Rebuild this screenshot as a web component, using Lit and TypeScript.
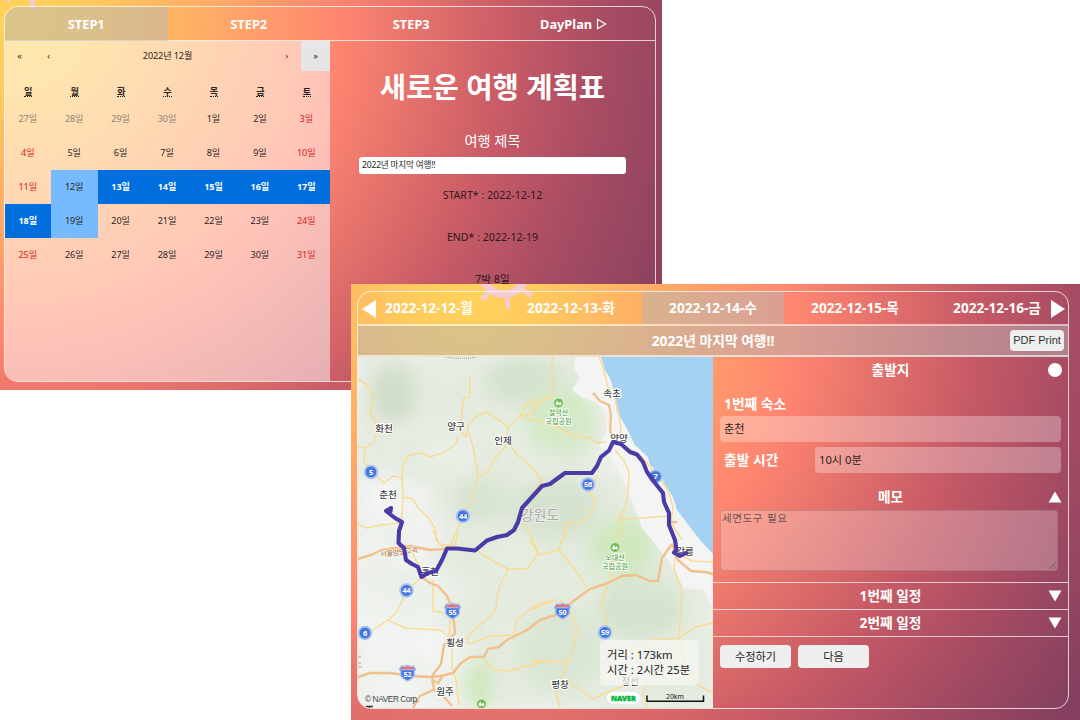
import { LitElement, html, svg, css } from "lit";
import { customElement, property } from "lit/decorators.js";
import { classMap } from "lit/directives/class-map.js";

const gear = (cls: string) => html`
  <svg class=${cls} viewBox="-40 -40 80 80" width="80" height="80" aria-hidden="true">
    <g fill="none" stroke="#f5cdd0">
      <circle r="22.2" stroke-width="8"></circle>
      <g stroke-width="5">
        <path d="M3 25 4 37M-16 21-22 28M17 17 28 24M-25 3-36 6M25-5 36-8M0-25 0-36M-17-17-25-25M17-18 25-26"></path>
      </g>
    </g>
  </svg>`;

@customElement("trip-calendar")
class TripCalendar extends LitElement {
  static styles = css`
    :host { display: block; background: rgba(255, 255, 255, 0.5); font-size: 9.1px; color: #2a2522; letter-spacing: -0.1px; }
    .nav { display: grid; grid-template-columns: 29px 29px 1fr 29px 29px; height: 30px; line-height: 30px; text-align: center; margin-bottom: 11px; }
    .month { font-size: 9.1px; }
    .last { background: #e6e6e6; height: 30px; }
    .grid { display: grid; grid-template-columns: repeat(7, 1fr); text-align: center; }
    .wd { height: 20px; line-height: 20px; font-weight: 600; }
    .wd span { border-bottom: 1px dotted #222; display: inline-block; line-height: 9px; }
    .day { height: 34px; line-height: 34px; padding-right: 1px; }
    .out { color: #8d8377; }
    .red { color: #d82222; }
    .edge { background: #76baff; }
    .range { background: #006edc; color: #fff; font-weight: 700; }
  `;
  render() {
    const days = [27, 28, 29, 30, ...Array.from({ length: 31 }, (_, i) => i + 1)];
    return html`
      <div class="nav"><span>«</span><span>‹</span><span class="month">2022년 12월</span><span>›</span><span class="last">»</span></div>
      <div class="grid">
        ${["일", "월", "화", "수", "목", "금", "토"].map((d) => html`<div class="wd"><span>${d}</span></div>`)}
        ${days.map((d, i) => {
          const out = i < 4;
          const range = !out && d >= 13 && d <= 18;
          return html`<div class=${classMap({
            day: true, out, range,
            edge: !out && (d === 12 || d === 19),
            red: !out && !range && (i % 7 === 6 || i % 7 === 0),
          })}>${d}일</div>`;
        })}
      </div>`;
  }
}

@customElement("route-map")
class RouteMap extends LitElement {
  static styles = css`
    :host { display: block; position: relative; overflow: hidden; }
    svg { display: block; }
    text { font-family: "Noto Sans", "Noto Sans CJK KR", sans-serif; }
    .city { font-size: 9.6px; fill: #444; stroke: #fff; stroke-width: 2px; paint-order: stroke; text-anchor: middle; font-weight: 500; }
    .park { font-size: 7px; fill: #4c9f43; stroke: #fff; stroke-width: 1.5px; paint-order: stroke; text-anchor: middle; font-weight: 500; }
    .num { font-size: 7.4px; fill: #fff; text-anchor: middle; font-weight: 700; letter-spacing: -0.3px; }
    .minor { fill: none; stroke: #f8dc96; stroke-width: 1.5; stroke-linejoin: round; }
    .major { fill: none; stroke: #f2c08c; stroke-width: 2.4; stroke-linejoin: round; }
    .route { fill: none; stroke: #4a3ba7; stroke-width: 4.1; stroke-linejoin: round; stroke-linecap: round; }
    .info { position: absolute; left: 242px; top: 283px; width: 99px; height: 45px; box-sizing: border-box; padding: 7px 0 0 7px; background: rgba(247, 247, 242, 0.72); border-radius: 4px; font-size: 11.3px; line-height: 15px; color: #222; white-space: nowrap; }
  `;
  private city(x: number, y: number, t: string) { return svg`<text class="city" x=${x} y=${y}>${t}</text>`; }
  private circleSign(x: number, y: number, n: string) {
    return svg`<circle cx=${x} cy=${y} r="7.2" fill="#9dbcf2"></circle><circle cx=${x} cy=${y} r="5.9" fill="#4676de" stroke="#dce8fb" stroke-width=".6"></circle><text class="num" x=${x} y=${y + 2.7}>${n}</text>`;
  }
  private shield(x: number, y: number, n: string) {
    return svg`<g transform="translate(${x} ${y})"><path d="M-6-7Q-3-6 0-7.5 3-6 6-7L8-4Q6-1 7 2 6 5 0 8-6 5-7 2-6-1-8-4Z" fill="#4676de" stroke="#a9c4f2" stroke-width="1.4"></path><path d="M-6-6.3H6V-3.6H-6Z" fill="#ee7374"></path><path d="M-6.5-3.2H6.5" stroke="#dde8fb" stroke-width=".7"></path><text class="num" x="0" y="4">${n}</text></g>`;
  }
  private tree(x: number, y: number) {
    return svg`<g transform="translate(${x} ${y})"><circle r="4.9" fill="#6bbb52" stroke="#e7f5df" stroke-width=".8"></circle><path d="M-1.4-2.8-3.2 1.4H-1.8V2.7H-1V1.4H3.4L1.7-1.8.5.2Z" fill="#fff"></path><path d="M1.6 1.2V2.7" stroke="#fff" stroke-width=".8"></path></g>`;
  }
  render() {
    return html`
      <svg viewBox="358 357 355 351" width="355" height="351">
        <defs>
          <filter id="soft" x="-30%" y="-30%" width="160%" height="160%"><feGaussianBlur stdDeviation="9"></feGaussianBlur></filter>
          <filter id="grain" x="0" y="0" width="100%" height="100%">
            <feTurbulence type="fractalNoise" baseFrequency=".022" numOctaves="4" seed="8"></feTurbulence>
            <feColorMatrix values="0 0 0 0 .72  0 0 0 0 .8  0 0 0 0 .66  1.9 0 0 0 -.72"></feColorMatrix>
          </filter>
        </defs>
        <rect x="358" y="357" width="355" height="351" fill="#f0f2ef"></rect>
        <g filter="url(#soft)">
          <path d="M358 357H600L590 400 605 440 590 470 650 500 670 560 713 590V708H490L470 640 400 600 450 540 430 480 358 470Z" fill="#e5ece1"></path>
          <ellipse cx="393" cy="393" rx="22" ry="30" fill="#d0dcc8"></ellipse>
          <ellipse cx="525" cy="380" rx="40" ry="25" fill="#d5e2cf"></ellipse>
          <ellipse cx="562" cy="420" rx="36" ry="32" fill="#d3eac4"></ellipse>
          <ellipse cx="480" cy="500" rx="28" ry="22" fill="#d8e3d2"></ellipse>
          <ellipse cx="555" cy="510" rx="45" ry="30" fill="#d6e2ce"></ellipse>
          <ellipse cx="622" cy="548" rx="34" ry="30" fill="#cfe8bd"></ellipse>
          <ellipse cx="640" cy="610" rx="45" ry="30" fill="#d6e2cf"></ellipse>
          <ellipse cx="478" cy="685" rx="14" ry="26" fill="#cee8bc"></ellipse>
          <ellipse cx="560" cy="650" rx="42" ry="45" fill="#dae6d3"></ellipse>
          <ellipse cx="450" cy="460" rx="30" ry="14" fill="#edf2ea"></ellipse>
          <ellipse cx="388" cy="510" rx="26" ry="40" fill="#f4f5f5"></ellipse>
          <ellipse cx="400" cy="650" rx="46" ry="45" fill="#f3f5f3"></ellipse>
          <ellipse cx="430" cy="590" rx="40" ry="24" fill="#ecf1ea"></ellipse>
        </g>
        <rect x="358" y="357" width="355" height="351" filter="url(#grain)" opacity=".42"></rect>
        <path d="M575 357H601L640 450 713 554V610L704 590 684 588 668 560 642 528 632 500 622 478 612 458 600 446 606 432 607 412 596 402 582 398 572 390 580 378 574 368Z" fill="#f4f4f4"></path>
        <path d="M601 357 605 370 610 378 613 388 615 399 617 412 625 425 630 435 635 445 648 457 650 465 660 473 665 485 673 497 677 510 690 527 700 540 713 554V357Z" fill="#a5d2f3"></path>
        <path d="M446 357.3Q462 359.5 476 357.3" fill="none" stroke="#888" stroke-dasharray="1 1"></path>

        <g class="minor">
          <path d="M358 379 366 384 372 394 373 403 370 413 377 424 374 442 365 448 364 462 376 475 384 483 393 476 402 478 403 465 409 455 422 453 430 457 443 453 455 445 458 437M468 425 474 418 486 412 499 420 508 427 505 447 494 460 487 473 478 476 473 447 468 430"></path>
          <path d="M358 446 365 449M470 377V397L463 399 462 416 458 430 466 437 468 425"></path>
          <path d="M508 427 520 416 532 414 540 402 551 397M520 416 527 404 540 398M524 418 540 421 558 427 575 436 590 438 598 443 606 442M531 409 545 399 551 395 554 380 551 370 553 357"></path>
          <path d="M510 445 517 455 525 461 534 470 541 480 535 490 542 486M478 476 473 495 465 511 457 530 449 548"></path>
          <path d="M402 478 403 497 401 525M403 497 413 499 418 508 427 516 436 530 436 540 447 549M358 524 367 528 381 525 400 523"></path>
          <path d="M599 357 604 370 608 387 615 398 619 415 621 430 617 442 640 455 655 473 668 490 673 507 671 522 682 540M615 450 624 461 629 472 628 493 625 508 618 520 630 519 668 516M598 475 592 486 589 493 595 498 592 510 584 522 567 523 564 537 558 550 574 568 587 587"></path>
          <path d="M622 519 619 536 614 557 610 580 601 601 604 611 607 627M523 508 526 524 530 535 538 553 527 569 508 569 491 560 477 551"></path>
          <path d="M508 569 499 588 495 612 479 626 467 637 469 644 491 636 513 635"></path>
          <path d="M433 580 433 611 450 614 450 630 447 640M421 578 407 590 402 601 397 612 388 620 370 632M388 620 405 628 440 630 447 635"></path>
          <path d="M530 540 539 555 558 550 563 540 567 523M530 609 543 602 558 600M560 600 571 612 577 630 573 650 568 662 530 661M568 662 561 680 556 691 560 708M568 680 577 687 592 699 610 691 640 680"></path>
          <path d="M676 552 674 568 682 590 680 620 679 638 650 640 620 658M679 638 695 627 713 623M679 638 684 660 699 686 713 693"></path>
          <path d="M485 660 493 670 510 671 529 665 550 660M513 640 517 620 528 611 550 602M452 641 452 667 456 680 459 705M680 555 692 561 713 562"></path>
          <path d="M410 548 419 566 422 578M646 684 643 693 647 708M433 530 440 545 455 545 458 532"></path>
        </g>
        <g class="major">
          <path d="M358 559 371 555 382 550 410 546 430 550 447 549M423 578 430 583 438 586 447 596 453 611 455 633 444 645 441 664 432 676 434 690 444 697 452 706M358 677 370 673 390 673 413 676 430 677 441 676 453 673 460 664 470 657 484 657 488 649 499 647 507 640 527 630 540 620 549 617 562 613 572 602 590 589 608 583 622 576 636 575 650 581 658 581 662 558 672 544"></path>
          <path d="M593 393 600 401 609 405 611 415 610 430 613 440M672 544 678 560 691 571 705 572 713 574M432 680 438 683 443 675M433 690 420 696 413 708M671 522H677"></path>
        </g>
        <path d="M358 657H361M358 663H361M358 667H362" stroke="#aaa"></path>

        ${this.city(384, 432, "화천")}${this.city(456, 430, "양구")}${this.city(503, 444, "인제")}
        ${this.city(388, 498, "춘천")}${this.city(612, 397, "속초")}${this.city(619, 442, "양양")}
        ${this.city(430, 575, "홍천")}${this.city(455, 646, "횡성")}${this.city(445, 695, "원주")}
        ${this.city(560, 688, "평창")}${this.city(685, 555, "강릉")}${this.city(630, 685, "정선")}
        <text x="540" y="519.5" font-size="14" fill="#a9aaa9" stroke="#eef1ec" stroke-width="1.5" paint-order="stroke" text-anchor="middle">강원도</text>
        <text x="380.5" y="557" font-size="7.2" fill="#a86a2c" stroke="#fff" stroke-width="1" paint-order="stroke" textLength="38" transform="rotate(-7 380 557)">서울양양고속</text>
        ${this.tree(558.5, 403)}<text class="park" x="558.5" y="415">설악산</text><text class="park" x="558.5" y="424">국립공원</text>
        ${this.tree(615, 547.5)}<text class="park" x="615" y="559.5">오대산</text><text class="park" x="615" y="568.5">국립공원</text>
        ${this.tree(481.5, 704)}
        ${this.circleSign(655.5, 476.5, "7")}
        <path class="route" d="M390.5 511.5 391 508 386 511 395 518 402 522 399 531 398.5 543 404 548 406 560 412 564 418 567 421.5 577 428 573 436 571 442 560 447 548.5 457 548.5 475 550.5 487 540.5 497 537 507 535 514 530 518 522 522 508 532 497 542 486 550 484 565 473H592L597 466 601 457 609 450.5 613 442 621 444 630 452 637 454.5 643 462 647 472 655 483 663 493 664 502 669 513V525L675 540 676.5 550 674 552.5 680 556 686 553"></path>
        ${this.circleSign(371, 472, "5")}${this.circleSign(463, 516, "44")}${this.circleSign(588, 484.5, "56")}
        ${this.circleSign(406.5, 590.5, "44")}${this.circleSign(365, 633, "6")}${this.circleSign(605, 632.5, "59")}
        ${this.shield(452.5, 611, "55")}${this.shield(407.5, 673, "52")}${this.shield(562.5, 611, "50")}
        <text x="365" y="702" font-size="8.3" fill="#444" textLength="54" style="font-family:'Liberation Sans',sans-serif">© NAVER Corp.</text>
        <path d="M366 706.5H373M369.5 706V708" stroke="#333" stroke-width="1.4"></path>
        <rect x="607" y="692" width="33" height="12" rx="6" fill="#fff"></rect>
        <text x="611" y="700.6" font-size="7" fill="#03b93c" stroke="#03b93c" stroke-width=".4" font-weight="900" textLength="25" lengthAdjust="spacingAndGlyphs">NAVER</text>
        <path d="M647 695.5V701.2H703.5V695.5" fill="none" stroke="#111" stroke-width="1.5"></path>
        <text x="675" y="698.6" font-size="6.9" fill="#222" text-anchor="middle">20km</text>
      </svg>
      <div class="info">거리 : 173km<br>시간 : 2시간 25분</div>`;
  }
}

@customElement("app-root")
class AppRoot extends LitElement {
  static styles = css`
    :host { display: block; position: relative; width: 1080px; height: 720px; overflow: hidden; background: #fff; font-family: "Noto Sans", "Noto Sans CJK KR", sans-serif; color: #fff; }
    * { box-sizing: border-box; }
    .window { position: absolute; overflow: hidden; }
    .step { left: 0; top: 0; width: 662px; height: 390px; padding: 6px 6px 8px 4px; background: radial-gradient(circle at 10px 10px, #ffd25a 0, #ffca5e 80px, #ffad67 195px, #ff8670 328px, #c85b66 500px, #a84c63 595px, #87405f 720px, #7d3c5e 800px); }
    .plan { left: 351px; top: 284px; width: 729px; height: 436px; padding: 7px 11px 11px 6px; background: radial-gradient(circle at 120px 20px, #ffd25a 0, #ffca5e 65px, #ffad67 180px, #ff8670 325px, #c85b66 500px, #a84c63 600px, #87405f 710px, #7d3c5e 800px); }
    .gear { position: absolute; }
    .gear-a { left: -11px; top: -67px; }
    .gear-b { left: 113px; top: -52px; }
    .panel { position: relative; height: 100%; border: 1px solid rgba(255, 255, 255, 0.75); border-radius: 14px; overflow: hidden; display: flex; flex-direction: column; }
    .tabs { display: grid; flex: none; font-weight: 700; text-align: center; }
    .steps { grid-template-columns: repeat(4, 1fr); height: 34px; line-height: 34px; font-size: 12.8px; border-bottom: 1px solid rgba(255, 255, 255, 0.75); }
    .dates { grid-template-columns: repeat(5, 1fr); height: 34px; line-height: 32px; font-size: 13.6px; position: relative; border-bottom: 2px solid rgba(255, 255, 255, 0.6); }
    .on { background: rgba(181, 181, 181, 0.5); }
    .tri { margin-left: 1px; vertical-align: -1px; }
    .body { flex: 1; display: flex; min-height: 0; }
    trip-calendar { width: 325px; }
    .form { flex: 1; display: flex; flex-direction: column; align-items: center; color: #2b1a20; font-size: 10.6px; }
    .heading { margin-top: 26px; height: 40px; line-height: 40px; font-size: 28.6px; font-weight: 700; color: #fff; }
    .sub { margin-top: 25px; height: 18px; line-height: 18px; font-size: 14.2px; color: #fff; }
    .field { margin-top: 7px; width: 267px; height: 17px; line-height: 17px; background: #fff; border-radius: 3px; padding-left: 3px; font-size: 8.6px; letter-spacing: -0.2px; color: #222; }
    .line { height: 42px; line-height: 42px; }
    .title { flex: none; display: grid; grid-template-columns: 1fr auto 1fr; align-items: center; height: 31px; background: rgba(181, 181, 181, 0.5); border-bottom: 2px solid rgba(255, 255, 255, 0.6); font-size: 13.8px; font-weight: 700; }
    .name { line-height: 29px; }
    .pdf { justify-self: end; margin-right: 4px; width: 54px; height: 21px; text-align: center; border-radius: 4px; background: #efefef; color: #333; font: 400 11px/21px "Liberation Sans", sans-serif; }
    route-map { width: 355px; height: 351px; flex: none; color: #222; font-size: 11px; }
    .side { flex: 1; display: flex; flex-direction: column; }
    .row { display: grid; grid-template-columns: 28px 1fr 28px; align-items: center; justify-items: center; height: 27px; line-height: 24px; font-size: 13.7px; font-weight: 700; flex: none; }
    .row svg { display: block; margin-left: 1px; }
    .mid { grid-column: 2; }
    .start { margin-top: -1px; margin-bottom: 1px; }
    .label { font-size: 13.8px; font-weight: 700; height: 24px; line-height: 24px; padding-left: 4px; }
    .box { height: 26px; line-height: 26px; border-radius: 4px; background: rgba(255, 255, 255, 0.3); color: #2c2021; padding-left: 4px; font-size: 11.2px; }
    .dep { padding: 8px 7px 0; display: flex; flex-direction: column; }
    .time { display: grid; grid-template-columns: 95px 1fr; margin-top: 5px; align-items: center; }
    .memo { margin-top: 10px; }
    .note { position: relative; margin: 0 10px 11px 7px; height: 61px; border: 1px solid rgba(118, 100, 105, 0.35); border-radius: 4px; background: rgba(255, 255, 255, 0.25); color: #6a5254; font-size: 10.6px; letter-spacing: 0.45px; word-spacing: 1px; line-height: 14px; padding-left: 1px; }
    .grip { position: absolute; right: 0; bottom: 0; }
    .plain { border-top: 1px solid rgba(255, 255, 255, 0.7); }
    .buttons { border-top: 1px solid rgba(255, 255, 255, 0.7); padding: 8px 7px; display: flex; gap: 7px; }
    .btn { width: 71px; height: 23px; line-height: 23px; text-align: center; border-radius: 4px; background: #efefef; color: #222; font-size: 11.2px; }
    .prev, .next { position: absolute; top: 8px; }
    .prev { left: 4px; }
    .next { right: 3px; }
  `;

  @property({ type: Array }) dates = ["2022-12-12-월", "2022-12-13-화", "2022-12-14-수", "2022-12-15-목", "2022-12-16-금"];

  private arrow(up = false) {
    return html`<svg width="14" height="12" viewBox="0 0 14 12"><path d=${up ? "M.5 11.5 7 .5 13.5 11.5Z" : "M.5.5H13.5L7 11.5Z"} fill="#fff"></path></svg>`;
  }

  render() {
    return html`
      <section class="window step">
        ${gear("gear gear-a")}
        <div class="panel">
          <div class="tabs steps">
            <span class="on">STEP1</span><span>STEP2</span><span>STEP3</span>
            <span>DayPlan <svg class="tri" width="11" height="12" viewBox="0 0 11 12"><path d="M1.5 1.2V10.8L9.5 6Z" fill="none" stroke="#fff" stroke-width="1.2"></path></svg></span>
          </div>
          <div class="body">
            <trip-calendar></trip-calendar>
            <div class="form">
              <div class="heading">새로운 여행 계획표</div>
              <div class="sub">여행 제목</div>
              <div class="field">2022년 마지막 여행!!</div>
              <div class="line">START* : 2022-12-12</div>
              <div class="line">END* : 2022-12-19</div>
              <div class="line">7박 8일</div>
            </div>
          </div>
        </div>
      </section>

      <section class="window plan">
        ${gear("gear gear-b")}
        <div class="panel">
          <div class="tabs dates">
            ${this.dates.map((d, i) => html`<span class=${classMap({ on: i === 2 })}>${d}</span>`)}
            <svg class="prev" width="14" height="18" viewBox="0 0 14 18"><path d="M14 0V18L0 9Z" fill="#fff"></path></svg>
            <svg class="next" width="14" height="18" viewBox="0 0 14 18"><path d="M0 0V18L14 9Z" fill="#fff"></path></svg>
          </div>
          <div class="title"><span></span><span class="name">2022년 마지막 여행!!</span><span class="pdf">PDF Print</span></div>
          <div class="body">
            <route-map></route-map>
            <div class="side">
              <div class="row start"><span class="mid">출발지</span><svg width="14" height="14" viewBox="0 0 14 14"><circle cx="7" cy="7" r="7" fill="#fff"></circle></svg></div>
              <div class="dep">
                <div class="label">1번째 숙소</div>
                <div class="box">춘천</div>
                <div class="time"><div class="label">출발 시간</div><div class="box">10시 0분</div></div>
              </div>
              <div class="row memo"><span class="mid">메모</span>${this.arrow(true)}</div>
              <div class="note">세면도구 필요
                <svg class="grip" width="9" height="9" viewBox="0 0 9 9"><path d="M1 8 8 1M5 8 8 5" stroke="#6b5a60" stroke-width=".8"></path></svg>
              </div>
              <div class="row plain"><span class="mid">1번째 일정</span>${this.arrow()}</div>
              <div class="row plain"><span class="mid">2번째 일정</span>${this.arrow()}</div>
              <div class="buttons"><span class="btn">수정하기</span><span class="btn">다음</span></div>
            </div>
          </div>
        </div>
      </section>`;
  }
}
